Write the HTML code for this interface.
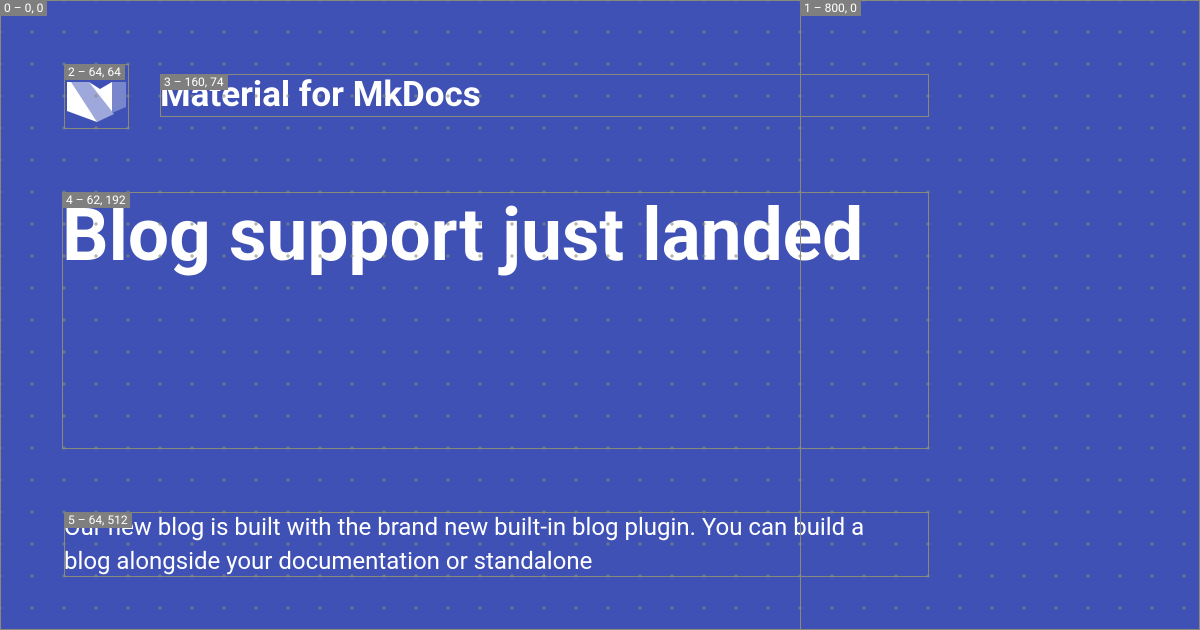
<!DOCTYPE html>
<html><head><meta charset="utf-8"><style>
html,body{margin:0;padding:0}
body{width:1200px;height:630px;background:#3f51b5;position:relative;overflow:hidden;font-family:"Roboto","Liberation Sans",sans-serif;color:#fff}
.t{position:absolute;white-space:nowrap}
.box{position:absolute;border:1px solid #8a8a7a;box-sizing:border-box}
.lab{position:absolute;background:#7f7f7f;color:#fff;font-size:12px;line-height:16px;padding:0 4px;white-space:nowrap}
svg{position:absolute;left:0;top:0}
</style></head><body>
<svg width="1200" height="630" style="z-index:0">
<polygon points="67,82 112,82 112,113 97,122 67,111" fill="#fff"/>
<polygon points="71,82 89,82 114,114 97,122" fill="#9fa8da"/>
<polygon points="89,82 112,82 100,89" fill="#3f51b5"/>
<polygon points="112,82 126,82 126,107 112,113" fill="#7986cb"/>
</svg>
<div class="t" style="left:160px;top:73px;font-size:35px;font-weight:bold;line-height:44px">Material for MkDocs</div>
<div class="t" style="left:62px;top:188px;font-size:73px;font-weight:bold;line-height:94px">Blog support just landed</div>
<div class="t" style="left:64px;top:510px;font-size:24px;line-height:34px">Our new blog is built with the brand new built-in blog plugin. You can build a<br>blog alongside your documentation or standalone</div>
<svg width="1200" height="630" style="z-index:2">
<defs><pattern id="p" x="16" y="16" width="32" height="32" patternUnits="userSpaceOnUse">
<path d="M14 16h4M16 14v4" stroke="#8a8a7a" stroke-width="1" opacity="0.8"/></pattern></defs>
<rect width="1200" height="630" fill="url(#p)"/>
<rect x="0.5" y="0.5" width="1199" height="629" fill="none" stroke="#8a8a7a"/>
<line x1="800.5" y1="0" x2="800.5" y2="630" stroke="#8a8a7a"/>
</svg>
<div class="box" style="left:64px;top:64px;width:65px;height:65px;z-index:3"></div>
<div class="box" style="left:160px;top:74px;width:769px;height:43px;z-index:3"></div>
<div class="box" style="left:62px;top:192px;width:867px;height:257px;z-index:3"></div>
<div class="box" style="left:64px;top:512px;width:865px;height:65px;z-index:3"></div>
<div class="lab" style="left:0;top:0;z-index:4">0 – 0, 0</div>
<div class="lab" style="left:800px;top:0;z-index:4">1 – 800, 0</div>
<div class="lab" style="left:64px;top:64px;z-index:4">2 – 64, 64</div>
<div class="lab" style="left:160px;top:74px;z-index:4">3 – 160, 74</div>
<div class="lab" style="left:62px;top:192px;z-index:4">4 – 62, 192</div>
<div class="lab" style="left:64px;top:512px;z-index:4">5 – 64, 512</div>
</body></html>
